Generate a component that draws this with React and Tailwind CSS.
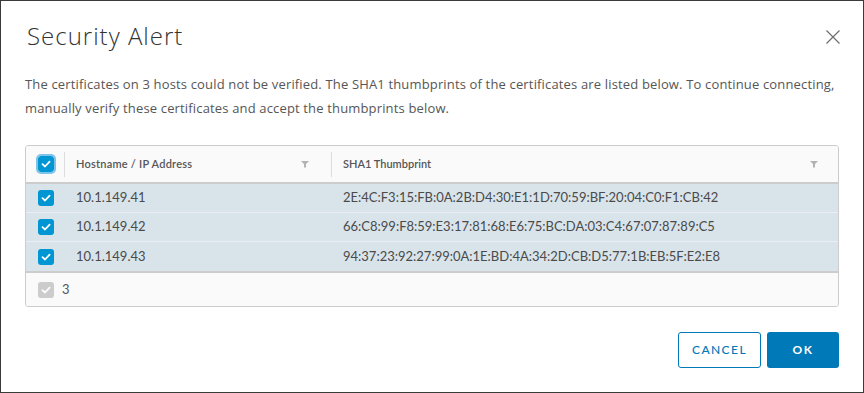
import React from "react";

const Check = ({ color = "#fff" }) => (
  <svg width="10" height="8" viewBox="0 0 10 8" fill="none">
    <path d="M1.5 4.2 L4 6.5 L8.6 1.6" stroke={color} strokeWidth="1.8" strokeLinecap="round" strokeLinejoin="round" />
  </svg>
);

const Box = ({ disabled = false, focus = false }) => (
  <div
    className={`w-4 h-4 rounded-[3px] flex items-center justify-center ${
      disabled ? "bg-[#cccccc]" : "bg-[#0095d3]"
    } ${focus ? "outline outline-2 outline-[#7fc4e8] outline-offset-0" : ""}`}
  >
    <Check />
  </div>
);

const Filter = () => (
  <svg width="8" height="7" viewBox="0 0 8 7">
    <path d="M0 0 H8 L5 3 V6.5 H3 V3 Z" fill="#b3b3b3" />
  </svg>
);

const rows = [
  ["10.1.149.41", "2E:4C:F3:15:FB:0A:2B:D4:30:E1:1D:70:59:BF:20:04:C0:F1:CB:42"],
  ["10.1.149.42", "66:C8:99:F8:59:E3:17:81:68:E6:75:BC:DA:03:C4:67:07:87:89:C5"],
  ["10.1.149.43", "94:37:23:92:27:99:0A:1E:BD:4A:34:2D:CB:D5:77:1B:EB:5F:E2:E8"],
];

export default function App() {
  return (
    <div
      className="w-[864px] h-[393px] bg-white border border-[#3a3a3a] px-6 flex flex-col"
      style={{ fontFamily: "Lato, 'Open Sans', sans-serif" }}
    >
      <div className="flex items-start justify-between pt-[19px]">
        <h1
          className="ml-[2px] text-[24px] leading-[32px] font-light text-[#333] tracking-[1px]"
          style={{ fontFamily: "'Open Sans', sans-serif" }}
        >
          Security Alert
        </h1>
        <svg width="14" height="14" viewBox="0 0 14 14" className="mt-[10px] mr-[-1px]">
          <path d="M0.5 0.5 L13.5 13.5 M13.5 0.5 L0.5 13.5" stroke="#6e6e6e" strokeWidth="1.2" />
        </svg>
      </div>
      <p
        className="mt-[20px] text-[13px] leading-[24px] text-[#565656] tracking-[0.012em]"
        style={{ fontFamily: "'Open Sans', sans-serif" }}
      >
        The certificates on 3 hosts could not be verified. The SHA1 thumbprints of the certificates are listed below. To continue connecting, manually verify these certificates and accept the thumbprints below.
      </p>
      <div className="mt-[25px] border border-[#cccccc] rounded-[3px] overflow-hidden">
        <div className="flex h-[38px] items-center bg-[#fafafa] border-b-2 border-[#cccccc] text-[11px] font-semibold text-[#565656]">
          <div className="w-[38px] flex justify-center pl-[1px] h-full items-center">
            <Box focus />
          </div>
          <div className="w-px h-[25px] bg-[#dddddd]" />
          <div className="w-[266px] flex items-center justify-between pl-[11px] pr-[22px]">
            <span className="tracking-[0.02em]">Hostname / IP Address</span>
            <Filter />
          </div>
          <div className="w-px h-[25px] bg-[#dddddd]" />
          <div className="flex-1 flex items-center justify-between pl-[11px] pr-[20px]">
            <span>SHA1 Thumbprint</span>
            <Filter />
          </div>
        </div>
        {rows.map(([h, t], i) => (
          <div
            key={h}
            className={`flex h-[29px] items-center bg-[#d9e4ea] text-[13px] text-[#4a4a4a] ${
              i < 2 ? "border-b border-[#e8eef2]" : ""
            }`}
          >
            <div className="w-[38px] flex justify-center pl-[1px]">
              <Box />
            </div>
            <div className="w-[267px] pl-[12px]">{h}</div>
            <div className="flex-1 pl-[12px]">{t}</div>
          </div>
        ))}
        <div className="flex h-[35px] items-center bg-[#fafafa] border-t-2 border-[#cccccc] text-[13px] text-[#565656]">
          <div className="w-[38px] flex justify-center pl-[1px]">
            <Box disabled />
          </div>
          <span className="-ml-[2px]">3</span>
        </div>
      </div>
      <div className="mt-[25px] flex justify-end gap-[6px]">
        <button className="w-[83px] h-[36px] rounded-[3px] border border-[#0079b8] text-[#0079b8] text-[12px] font-medium tracking-[0.12em] bg-white">
          CANCEL
        </button>
        <button className="w-[72px] h-[36px] rounded-[3px] bg-[#0079b8] text-white text-[12px] font-bold tracking-[0.12em]">
          OK
        </button>
      </div>
    </div>
  );
}
